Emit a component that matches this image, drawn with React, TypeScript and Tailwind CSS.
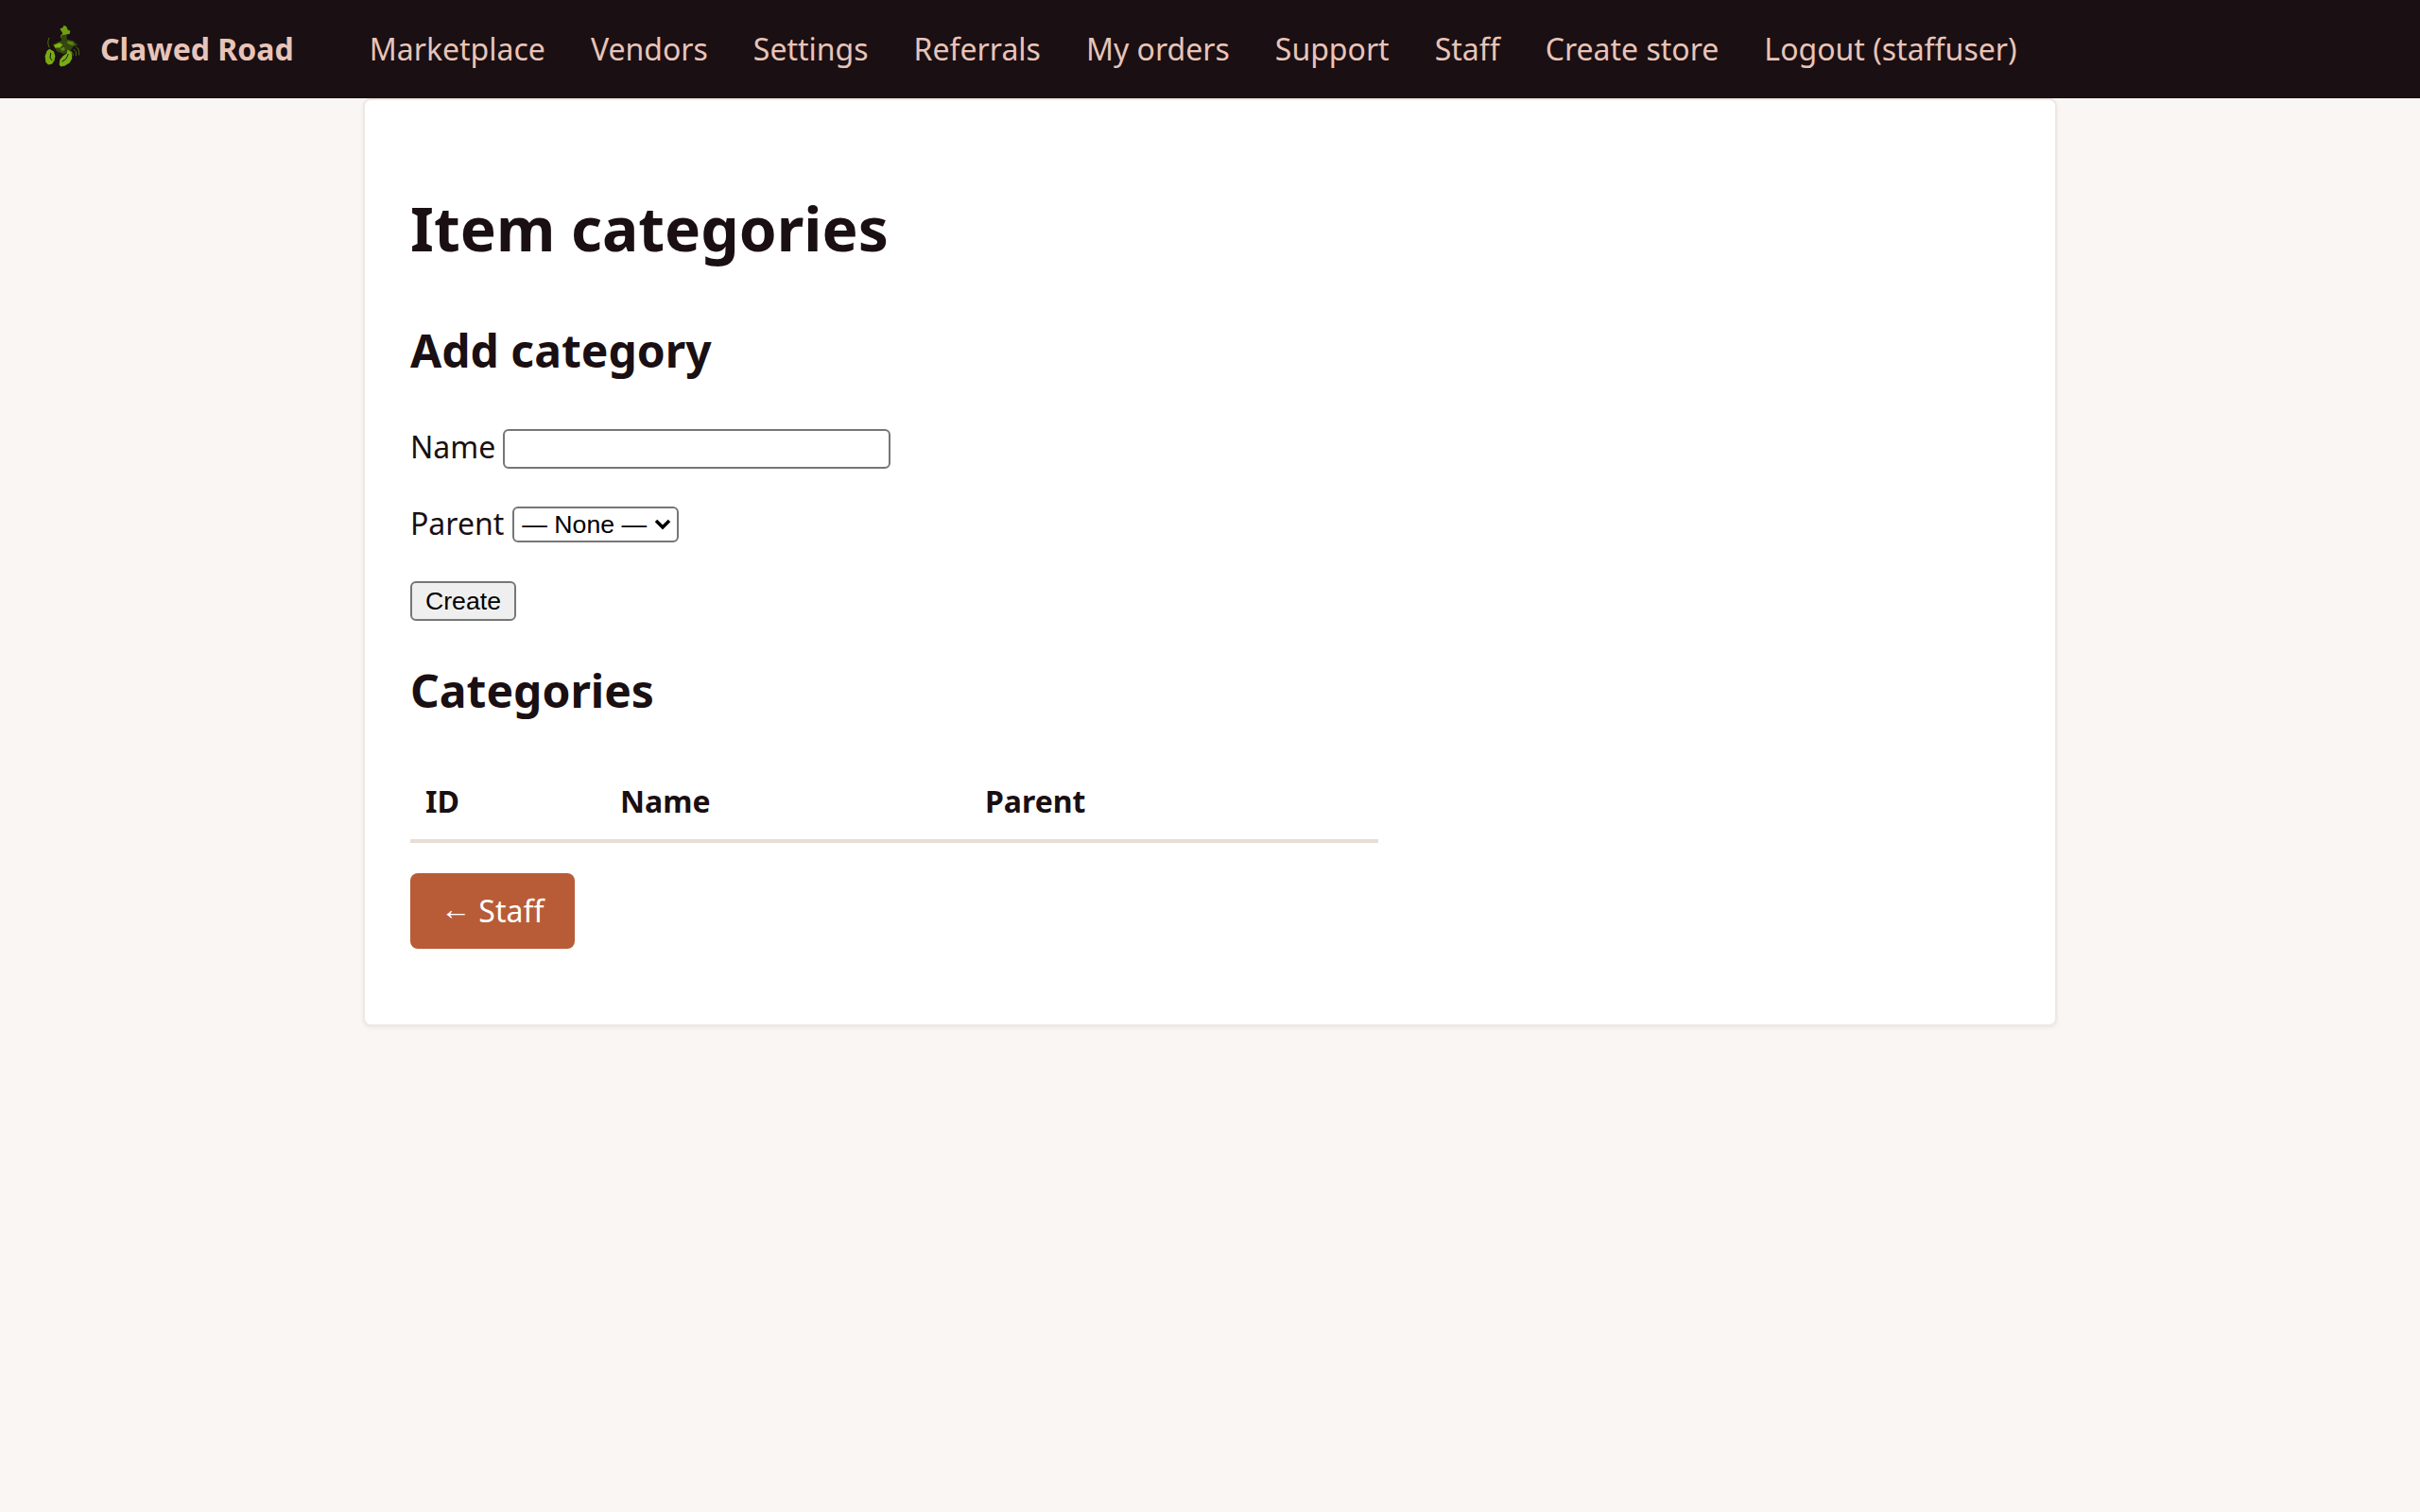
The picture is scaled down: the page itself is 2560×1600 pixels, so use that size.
const NAV = ["Marketplace", "Vendors", "Settings", "Referrals", "My orders", "Support", "Staff", "Create store", "Logout (staffuser)"];

function Logo() {
  return (
    <svg width="40" height="47" viewBox="50 30 120 140" className="mb-[7px] shrink-0">
      {/* tail */}
      <path d="M112 35l8 4 4 10 8 4-2 9-12 3 1 14-14 3-4-14 7-8-9-14 9-4z" fill="#6f9e12" />
      <path d="M104 66l16-2 2 16-18 4z" fill="#33480d" />
      {/* body */}
      <path d="M76 96l22-10 24-6 20 4 14 14-14 4-12 16-18 8-22-8z" fill="#33480d" />
      <path d="M80 98l18-8 10 6-8 10-16 0z" fill="#7fb414" />
      <path d="M124 84l16 3 6 11-12 0-12-6z" fill="#5c8211" />
      <path d="M100 108l12-4 4 8-10 6z" fill="#5c8211" />
      {/* legs and feelers */}
      <path d="M66 106C60 96 60 84 65 74M150 104l8 6 2 20M142 110l8 8 0 14M134 116l6 8 0 8" stroke="#4f6f10" strokeWidth="3" fill="none" />
      {/* claws */}
      <path d="M66 110l14 8 4 14-2 14-8 12-12 2-8-8-2-20 6-16z" fill="#78ab14" />
      <path d="M124 112l12 8 2 20-8 14-16 10-12 2-5-6 2-16 10-12 12-8z" fill="#78ab14" />
      <path d="M70 122l-2 16 6 8M126 126l-8 16-12 8" stroke="#1a0f12" strokeWidth="3" fill="none" />
    </svg>
  );
}

export default function App() {
  return (
    <div className="min-h-[1600px] bg-[#faf6f3] font-['Noto_Sans',sans-serif] text-[32px] leading-[48px] text-[#1a0f12]">
      <header className="flex h-[104px] items-center bg-[#1a0f12] pl-[47px] text-[#e8c4b8]">
        <Logo />
        <span className="ml-[19px] mr-[48px] font-bold">Clawed Road</span>
        <nav className="ml-[32px] flex gap-[48px]">
          {NAV.map((n) => (
            <a key={n}>{n}</a>
          ))}
        </nav>
      </header>

      <main className="mx-auto w-[1792px] rounded-[8px] border-2 border-[#efe7e3] bg-white px-[48px] pb-[80px] pt-[48px] shadow-[0_2px_4px_rgba(28,15,19,0.06)]">
        <h1 className="mt-[44px] text-[64px] font-bold leading-[88px]">Item categories</h1>
        <h2 className="mt-[53px] text-[48px] font-bold leading-[64px]">Add category</h2>

        <div className="mt-[46px] flex items-center">
          <label className="mb-[1px]">Name</label>
          <input className="ml-[8px] mt-[2px] h-[42px] w-[410px] rounded-[6px] border-2 border-[#767676] bg-white" />
        </div>
        <div className="mt-[32px] flex items-center">
          <label className="mb-[1px]">Parent</label>
          <div className="relative ml-[9px] mt-[1px]">
            <select className="block h-[38px] w-[176px] appearance-none rounded-[6px] border-2 border-[#767676] bg-white pl-[8px] font-['Liberation_Sans',sans-serif] text-[26.67px] leading-[32px] text-black">
              <option>— None —</option>
            </select>
            <svg width="18" height="12" viewBox="0 0 18 12" className="pointer-events-none absolute right-[8px] top-[13px]">
              <path d="M2 2l7 7 7-7" stroke="#000" strokeWidth="3.5" fill="none" />
            </svg>
          </div>
        </div>
        <div className="mt-[30px]">
          <button className="h-[42px] w-[112px] rounded-[6px] border-2 border-[#767676] bg-[#efefef] font-['Liberation_Sans',sans-serif] text-[26.67px] leading-none text-black">
            Create
          </button>
        </div>

        <h2 className="mt-[42px] text-[48px] font-bold leading-[64px]">Categories</h2>

        <table className="mt-[45px] w-[1024px] border-collapse">
          <thead>
            <tr className="border-b-[4px] border-[#e8dcd6] text-left">
              <th className="w-[206px] px-[16px] py-[16px] font-bold">ID</th>
              <th className="w-[386px] px-[16px] py-[16px] font-bold">Name</th>
              <th className="px-[16px] py-[16px] font-bold">Parent</th>
            </tr>
          </thead>
        </table>

        <a className="mt-[32px] block w-fit rounded-[8px] bg-[#b85c38] py-[16px] pl-[32px] pr-[33px] text-white">
          <span className="align-[3px] leading-none">←</span> Staff
        </a>
      </main>
    </div>
  );
}
